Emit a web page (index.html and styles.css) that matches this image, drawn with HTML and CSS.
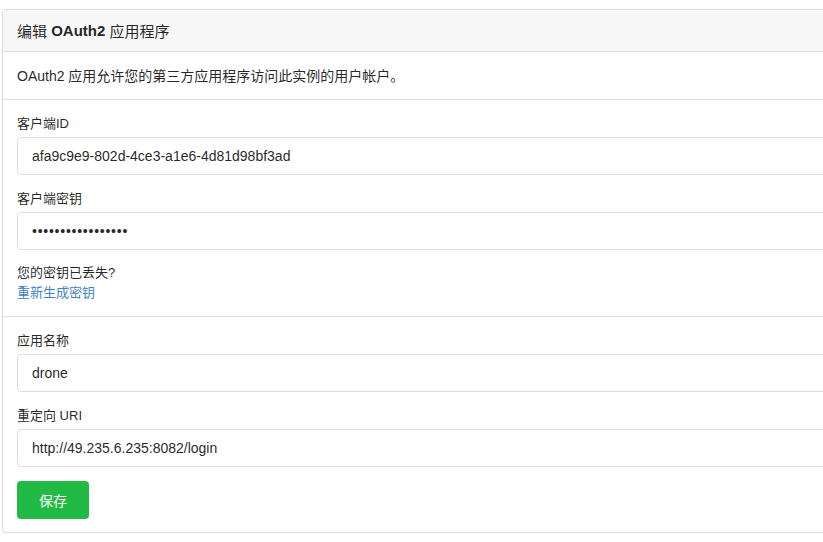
FILE: index.html
```html
<!DOCTYPE html>
<html lang="zh-CN">
<head>
<meta charset="utf-8">
<title>编辑 OAuth2 应用程序</title>
<link rel="stylesheet" href="styles.css">
</head>
<body>
<div class="card">
  <h4 class="card-header">编辑 <span class="strong">OAuth2</span> 应用程序</h4>
  <div class="section desc">OAuth2 应用允许您的第三方应用程序访问此实例的用户帐户。</div>
  <div class="section">
    <div class="field">
      <label class="label">客户端ID</label>
      <input class="input" type="text" value="afa9c9e9-802d-4ce3-a1e6-4d81d98bf3ad" readonly>
    </div>
    <div class="field">
      <label class="label">客户端密钥</label>
      <input class="input input-secret" type="password" value="xxxxxxxxxxxxxxxxx" readonly>
    </div>
    <div class="lost">
      <div>您的密钥已丢失?</div>
      <a class="link" href="#">重新生成密钥</a>
    </div>
  </div>
  <div class="section">
    <div class="field">
      <label class="label">应用名称</label>
      <input class="input" type="text" value="drone">
    </div>
    <div class="field">
      <label class="label">重定向 URI</label>
      <input class="input" type="text" value="http://49.235.6.235:8082/login">
    </div>
    <button class="btn-save" type="button">保存</button>
  </div>
</div>
</body>
</html>
```
FILE: styles.css
```css
html, body {
  margin: 0;
  padding: 0;
  background: #ffffff;
  overflow: hidden;
}
body {
  font-family: "Liberation Sans", "Noto Sans CJK SC", sans-serif;
  font-size: 14px;
  color: rgba(0, 0, 0, 0.87);
  padding: 9px 0 0 2px;
}
.card {
  width: 900px;
  border: 1px solid #dcdcdd;
  border-radius: 4px 0 0 4px;
  background: #fff;
}
.card-header {
  margin: 0;
  height: 41px;
  display: flex;
  align-items: center;
  white-space: pre;
  padding: 0 14px;
  background: #f7f7f7;
  border-bottom: 1px solid #dcdcdd;
  font-size: 15px;
  font-weight: normal;
  border-radius: 4px 0 0 0;
}
.strong {
  font-weight: 600;
}
.section {
  padding: 15px 14px 13px;
  border-bottom: 1px solid #dedede;
}
.section:last-child {
  border-bottom: none;
}
.desc {
  padding: 14px 14px 13px;
  line-height: 20px;
}
.field {
  display: flex;
  flex-direction: column;
  margin-bottom: 15px;
}
.label {
  font-size: 13px;
  line-height: 18px;
  margin-bottom: 4px;
  color: rgba(0, 0, 0, 0.87);
}
.input {
  box-sizing: border-box;
  height: 38px;
  width: 100%;
  border: 1px solid #dedede;
  border-radius: 4px;
  padding: 0 14px;
  font-family: "Liberation Sans", "Noto Sans CJK SC", sans-serif;
  font-size: 14px;
  color: rgba(0, 0, 0, 0.87);
  background: #fff;
  outline: none;
}
.input-secret {
  letter-spacing: 0.75px;
}
.lost {
  margin-top: -2px;
  line-height: 20px;
  font-size: 13px;
}
.link {
  color: #4183c4;
  text-decoration: none;
  font-size: 13px;
}
.btn-save {
  box-sizing: border-box;
  height: 38px;
  width: 72px;
  margin-top: -1px;
  border: none;
  border-radius: 4px;
  background: #21ba45;
  color: #fff;
  font-family: "Liberation Sans", "Noto Sans CJK SC", sans-serif;
  font-size: 14px;
  cursor: pointer;
}
```
